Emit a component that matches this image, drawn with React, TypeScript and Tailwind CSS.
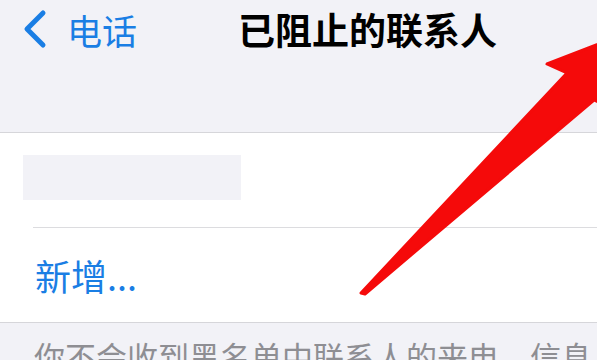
import React from 'react';

const cjk = { fontFamily: '"Noto Sans CJK SC", "Noto Sans", sans-serif' };

export default function App() {
  return (
    <div className="relative w-[597px] h-[360px] overflow-hidden bg-[#f2f2f7]" style={cjk}>
      {/* Nav bar */}
      <div className="h-[133px] border-b border-[#d6d6da]">
        <div className="flex items-center h-[58px]">
          <div className="flex items-center pl-[22px] w-[236px] text-[#1a7ee4]">
            <svg width="26" height="40" viewBox="0 0 26 40" className="shrink-0">
              <path d="M21 4 L5 20 L21 36" fill="none" stroke="currentColor" strokeWidth="5" strokeLinecap="round" strokeLinejoin="round" />
            </svg>
            <span className="ml-[19px] text-[35px] leading-none">电话</span>
          </div>
          <span className="ml-[2px] text-[37px] font-bold leading-none text-black">已阻止的联系人</span>
        </div>
      </div>

      {/* List section */}
      <div className="bg-white border-b border-[#d6d6da]">
        <div className="h-[95px] pt-[22px] border-b border-[#dcdcdf] ml-[33px] -mb-px">
          <div className="-ml-[10px] w-[218px] h-[45px] bg-[#f2f2f7]" />
        </div>
        <div className="h-[95px] flex items-center pl-[35px]">
          <span className="text-[36px] leading-none text-[#1a7ee4]">新增...</span>
        </div>
      </div>

      {/* Footer note */}
      <div className="pl-[34px] pt-[17px] text-[31px] leading-none text-[#8e8e93] whitespace-nowrap">
        你不会收到黑名单中联系人的来电、信息
      </div>

      {/* Red annotation arrow */}
      <svg className="absolute inset-0" width="597" height="360" viewBox="0 0 597 360">
        <path
          d="M361 293 L567 73 L547 64 L640 28 L612 108 L594 100 L365 294 Z"
          fill="#f50a0a"
          stroke="#f50a0a"
          strokeWidth="3"
          strokeLinejoin="round"
        />
      </svg>
    </div>
  );
}
